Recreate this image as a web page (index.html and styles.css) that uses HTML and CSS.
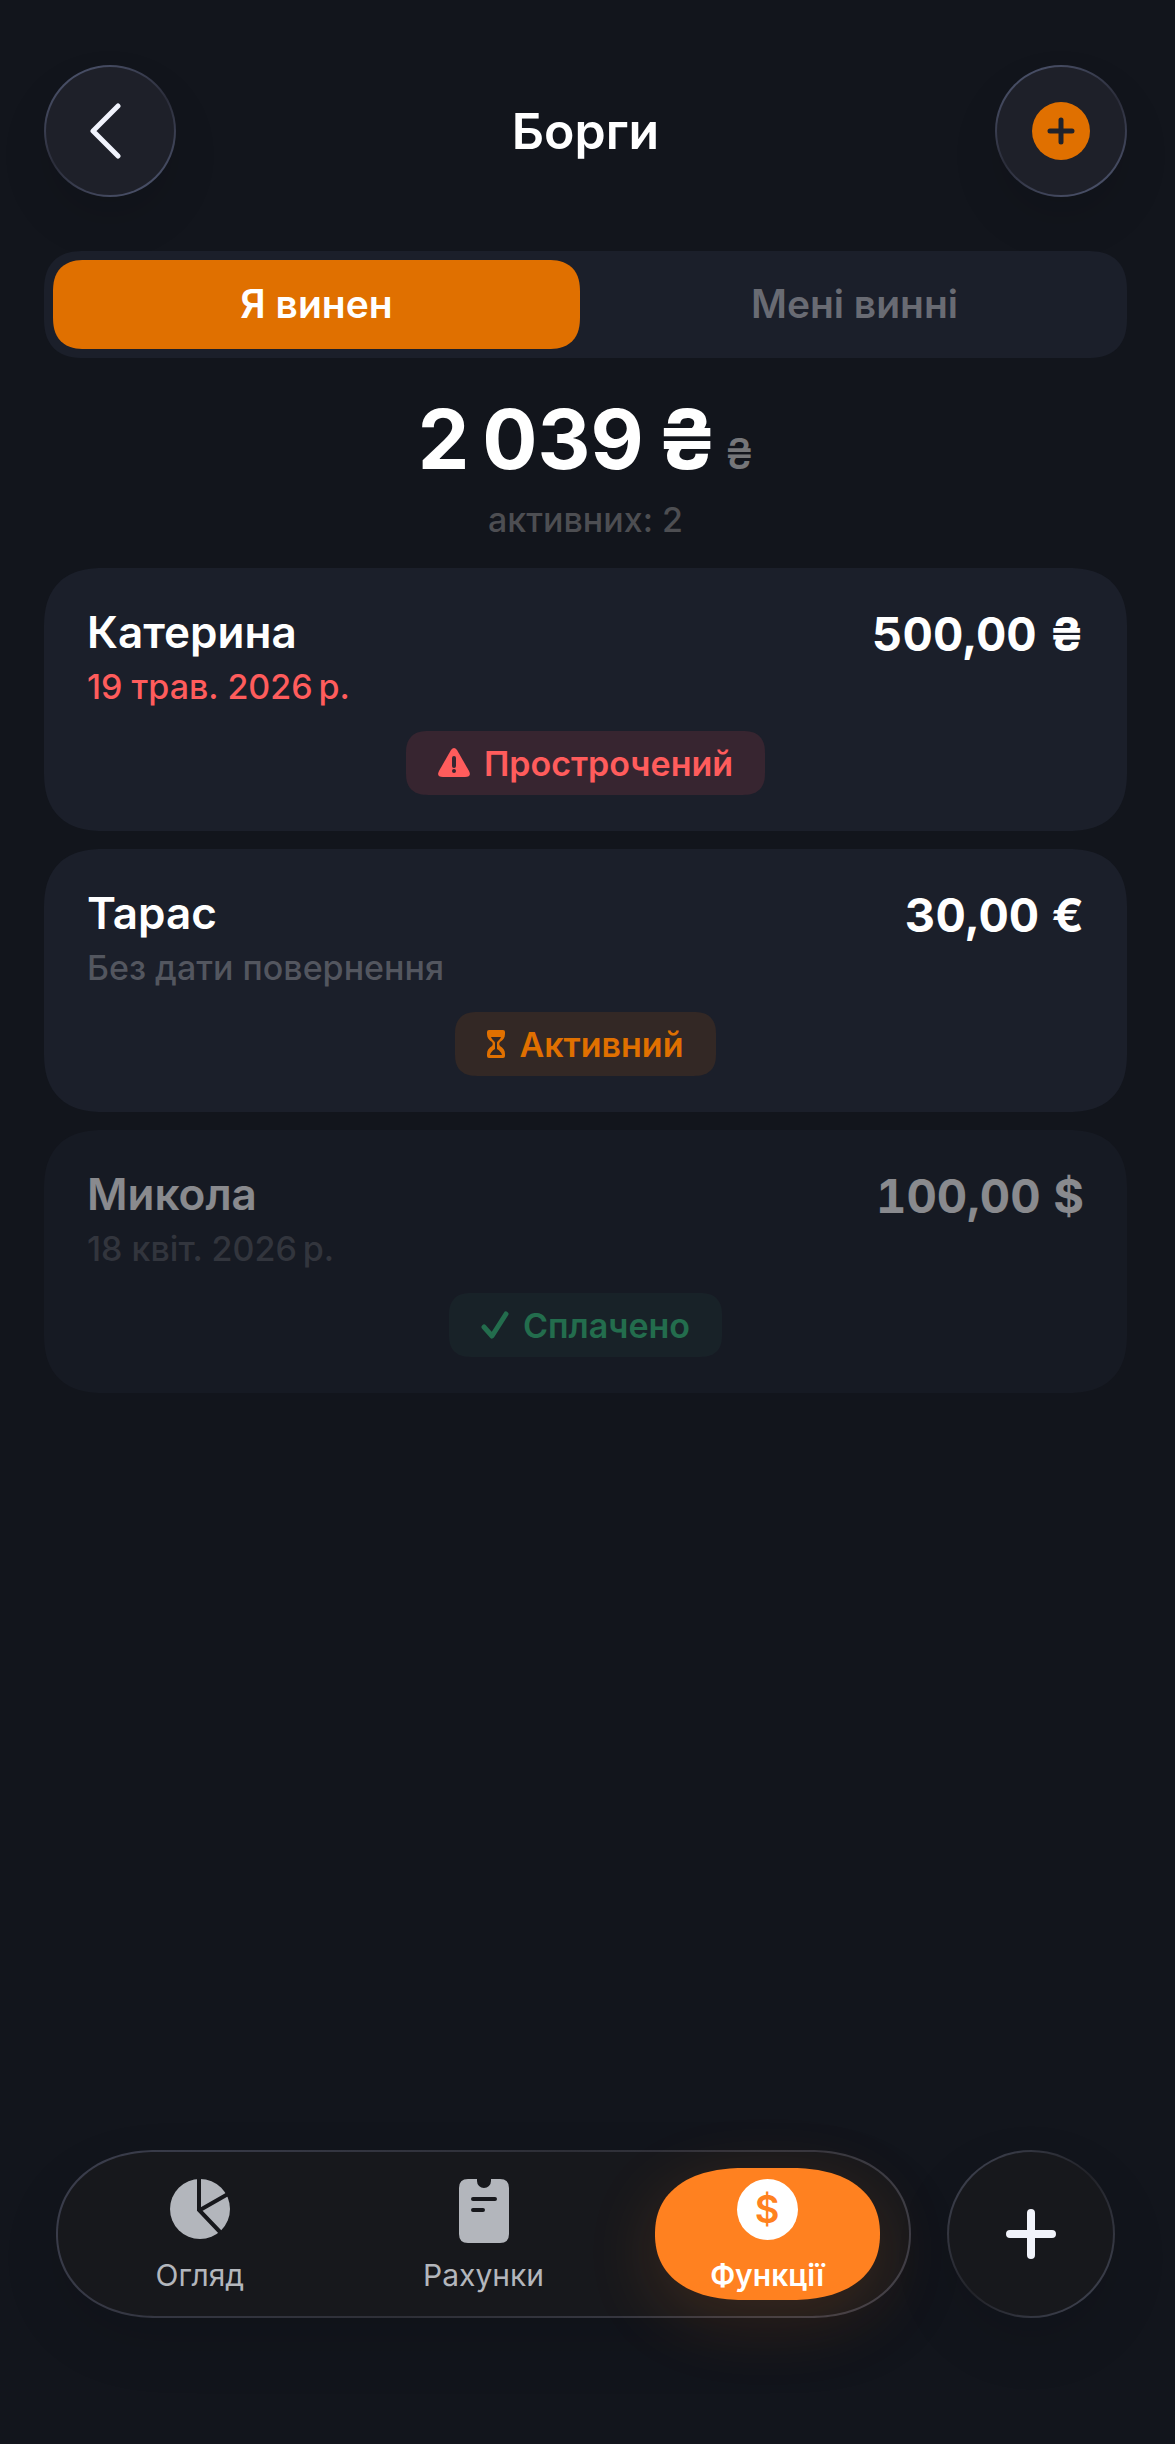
FILE: index.html
```
<!DOCTYPE html>
<html lang="uk">
<head>
    <meta charset="UTF-8">
    <meta name="viewport" content="width=device-width, initial-scale=1.0">
    <title>Борги</title>
    <link rel="stylesheet" href="styles.css">
</head>
<body>
    <header class="topbar">
        <button class="round-button" type="button" aria-label="Назад">
            <svg width="42" height="56" viewBox="0 0 42 56" fill="none" stroke="#f1f3fc" stroke-width="5" stroke-linecap="round" stroke-linejoin="round"><path d="M29 3 4 28l25 25"/></svg>
        </button>
        <h1>Борги</h1>
        <button class="round-button" type="button" aria-label="Додати борг">
            <svg width="58" height="58" viewBox="0 0 58 58"><circle cx="29" cy="29" r="29" fill="#e07000"/><path d="M29 18v22M18 29h22" stroke="#20222b" stroke-width="5" stroke-linecap="round"/></svg>
        </button>
    </header>

    <main>
        <div class="segments">
            <button class="segment active" type="button">Я винен</button>
            <button class="segment" type="button">Мені винні</button>
        </div>

        <section class="total">
            <p class="total-sum"><span>2&#8239;039&#8239;₴</span><span class="total-currency">₴</span></p>
            <p class="total-count">активних: 2</p>
        </section>

        <ul class="debts">
            <li class="debt">
                <div class="debt-row">
                    <div>
                        <h2>Катерина</h2>
                        <p class="debt-date late">19 трав. 2026&#8239;р.</p>
                    </div>
                    <strong class="amount">500,00 ₴</strong>
                </div>
                <span class="badge overdue">
                    <svg width="32" height="30" viewBox="0 0 32 30"><path d="M13 2Q16-2 19 2L31 23Q34 29 27 29H5Q-2 29 1 23Z" fill="currentColor"/><path d="M16 10v8" stroke="#372530" stroke-width="4" stroke-linecap="round"/><circle cx="16" cy="23" r="2" fill="#372530"/></svg>
                    Прострочений
                </span>
            </li>
            <li class="debt">
                <div class="debt-row">
                    <div>
                        <h2>Тарас</h2>
                        <p class="debt-date">Без дати повернення</p>
                    </div>
                    <strong class="amount">30,00 €</strong>
                </div>
                <span class="badge pending">
                    <svg width="18" height="28" viewBox="0 0 18 28"><path fill="currentColor" fill-rule="evenodd" d="M2 0h14q2 0 2 2v2c0 4-2 6-5 8-1 1-1 3 0 4 3 2 5 4 5 8v2q0 2-2 2H2q-2 0-2-2v-2c0-4 2-6 5-8 1-1 1-3 0-4C2 10 0 8 0 4V2q0-2 2-2ZM4 7c1 3 4 4 4 6v6c-3 2-4 3-5 6h12c-1-3-2-4-5-6v-6c0-2 3-3 4-6Z"/></svg>
                    Активний
                </span>
            </li>
            <li class="debt paid">
                <div class="debt-row">
                    <div>
                        <h2>Микола</h2>
                        <p class="debt-date">18 квіт. 2026&#8239;р.</p>
                    </div>
                    <strong class="amount">100,00 $</strong>
                </div>
                <span class="badge done">
                    <svg width="28" height="28" viewBox="0 0 28 28" fill="none" stroke="currentColor" stroke-width="5" stroke-linecap="round" stroke-linejoin="round"><path d="m3 16 8 9L25 3"/></svg>
                    Сплачено
                </span>
            </li>
        </ul>
    </main>

    <footer class="dock">
        <nav class="tabs">
            <a class="tab" href="#overview">
                <span class="tab-inner">
                    <svg width="60" height="60" viewBox="0 0 60 60"><circle cx="30" cy="30" r="30" fill="currentColor"/><path d="M29 0v31l22 23M30 31l28-16" fill="none" stroke="#17181c" stroke-width="4"/></svg>
                    Огляд
                </span>
            </a>
            <a class="tab" href="#accounts">
                <span class="tab-inner">
                    <svg width="50" height="64" viewBox="0 0 50 64"><path d="M9 0h9v2a7 7 0 0 0 14 0V0h9q9 0 9 9v46q0 9-9 9H9q-9 0-9-9V9q0-9 9-9Z" fill="currentColor"/><path d="M14 20h22M14 31h10" stroke="#17181c" stroke-width="4" stroke-linecap="round"/></svg>
                    Рахунки
                </span>
            </a>
            <a class="tab current" href="#features" aria-current="page">
                <span class="tab-inner">
                    <span class="coin">$</span>
                    Функції
                </span>
            </a>
        </nav>
        <button class="add-button" type="button" aria-label="Додати">
            <svg width="50" height="50" viewBox="0 0 50 50"><path d="M25 4v42M4 25h42" stroke="#f1f3fa" stroke-width="8" stroke-linecap="round"/></svg>
        </button>
    </footer>
</body>
</html>
```
FILE: styles.css
```
* {
    box-sizing: border-box;
}
body {
    display: flex;
    flex-direction: column;
    min-height: 100vh;
    margin: 0;
    padding: 65px 48px 126px 44px;
    font-family: Inter, "Liberation Sans", sans-serif;
    color: #fff;
    background: #12151c;
}
h1, h2, p, ul {
    margin: 0;
    padding: 0;
}
button {
    padding: 0;
    border: 0;
    font: inherit;
    color: inherit;
    background: none;
}
svg {
    display: block;
    flex: none;
}

/* header */
.topbar {
    display: flex;
    align-items: center;
    justify-content: space-between;
    margin-bottom: 54px;
}
.topbar h1 {
    font-size: 50px;
    line-height: 60px;
    font-weight: 600;
}
.round-button,
.add-button {
    display: flex;
    align-items: center;
    justify-content: center;
    border: 2px solid transparent;
    border-radius: 50%;
}
.round-button {
    width: 132px;
    height: 132px;
    background:
        linear-gradient(#1e2029, #1e2029) padding-box,
        linear-gradient(150deg, #525a75, #2b2d3a 50%, #525a75) border-box;
    box-shadow: 0 24px 48px rgba(0, 0, 0, 0.1);
}

/* segmented control */
.segments {
    display: grid;
    grid-template-columns: 1fr 1fr;
    gap: 11px;
    padding: 9px;
    border-radius: 40px;
    corner-shape: superellipse(1.3);
    background: #1b1f2a;
}
.segment {
    height: 89px;
    padding-bottom: 2px;
    border-radius: 32px;
    corner-shape: superellipse(1.3);
    font-size: 39px;
    font-weight: 600;
    color: #696b73;
}
.segment.active {
    color: #fff;
    background: #e07000;
}

/* total */
.total {
    padding: 32px 0 26px;
    text-align: center;
}
.total-sum {
    display: flex;
    align-items: baseline;
    justify-content: center;
    gap: 8px;
    font-size: 82px;
    line-height: 100px;
    font-weight: 700;
}
.total-currency {
    font-size: 42px;
    line-height: 50px;
    font-weight: 500;
    color: #757679;
}
.total-count {
    margin-top: 8px;
    font-size: 34px;
    line-height: 44px;
    font-weight: 500;
    color: #4d4e52;
}

/* debt cards */
.debts {
    display: grid;
    gap: 18px;
    list-style: none;
}
.debt {
    display: flex;
    flex-direction: column;
    align-items: center;
    padding: 36px 43px;
    border-radius: 60px;
    corner-shape: superellipse(1.3);
    background: #1b1f2a;
}
.debt.paid {
    opacity: 0.5;
}
.debt-row {
    display: flex;
    align-items: flex-start;
    justify-content: space-between;
    width: 100%;
    margin-bottom: 24px;
}
.debt h2 {
    font-size: 44px;
    line-height: 56px;
    font-weight: 600;
}
.debt-date {
    margin-top: 7px;
    font-size: 34px;
    line-height: 40px;
    font-weight: 500;
    color: #53565f;
}
.debt-date.late {
    color: #ff5c5c;
}
.amount {
    font-size: 47px;
    line-height: 60px;
    font-weight: 700;
    font-variant-numeric: tabular-nums;
}
.badge {
    display: flex;
    align-items: center;
    gap: 14px;
    height: 64px;
    padding: 0 32px;
    border-radius: 22px;
    corner-shape: superellipse(1.3);
    font-size: 34px;
    font-weight: 600;
}
.badge.overdue {
    color: #ff5c5c;
    background: #372530;
}
.badge.pending {
    color: #e07000;
    background: #332825;
}
.badge.done {
    color: #34c47f;
    background: #1f2f35;
}

/* bottom navigation */
.dock {
    display: flex;
    gap: 36px;
    margin-top: auto;
    padding: 0 12px;
}
.tabs {
    display: flex;
    flex: 1;
    height: 168px;
    border: 2px solid transparent;
    border-radius: 100px / 84px;
    corner-shape: superellipse(1.1);
    background:
        linear-gradient(#17181c, #17181c) padding-box,
        linear-gradient(135deg, #3b3e4d, #2e2f37 50%, #3f404b) border-box;
    box-shadow: 0 24px 60px rgba(0, 0, 0, 0.1);
}
.tab {
    display: flex;
    flex: 1;
    align-items: center;
    justify-content: center;
    font-size: 30px;
    line-height: 36px;
    color: #b3b6bc;
    text-decoration: none;
}
.tab-inner {
    display: flex;
    flex-direction: column;
    align-items: center;
    justify-content: space-between;
    width: 225px;
    height: 132px;
    padding: 11px 0 7px;
    border-radius: 90px / 66px;
    corner-shape: superellipse(1.2);
}
.tab.current .tab-inner {
    font-weight: 600;
    color: #fff;
    background: #ff8120;
    box-shadow: 0 18px 72px rgba(255, 129, 32, 0.16);
}
.coin {
    width: 61px;
    height: 61px;
    border-radius: 50%;
    font-size: 38px;
    line-height: 61px;
    text-align: center;
    color: #ff8120;
    background: #fff;
}
.add-button {
    width: 168px;
    height: 168px;
    background:
        linear-gradient(#17181c, #17181c) padding-box,
        linear-gradient(135deg, #444857, #222329 50%, #444857) border-box;
    box-shadow: 0 24px 60px rgba(0, 0, 0, 0.1);
}
```
